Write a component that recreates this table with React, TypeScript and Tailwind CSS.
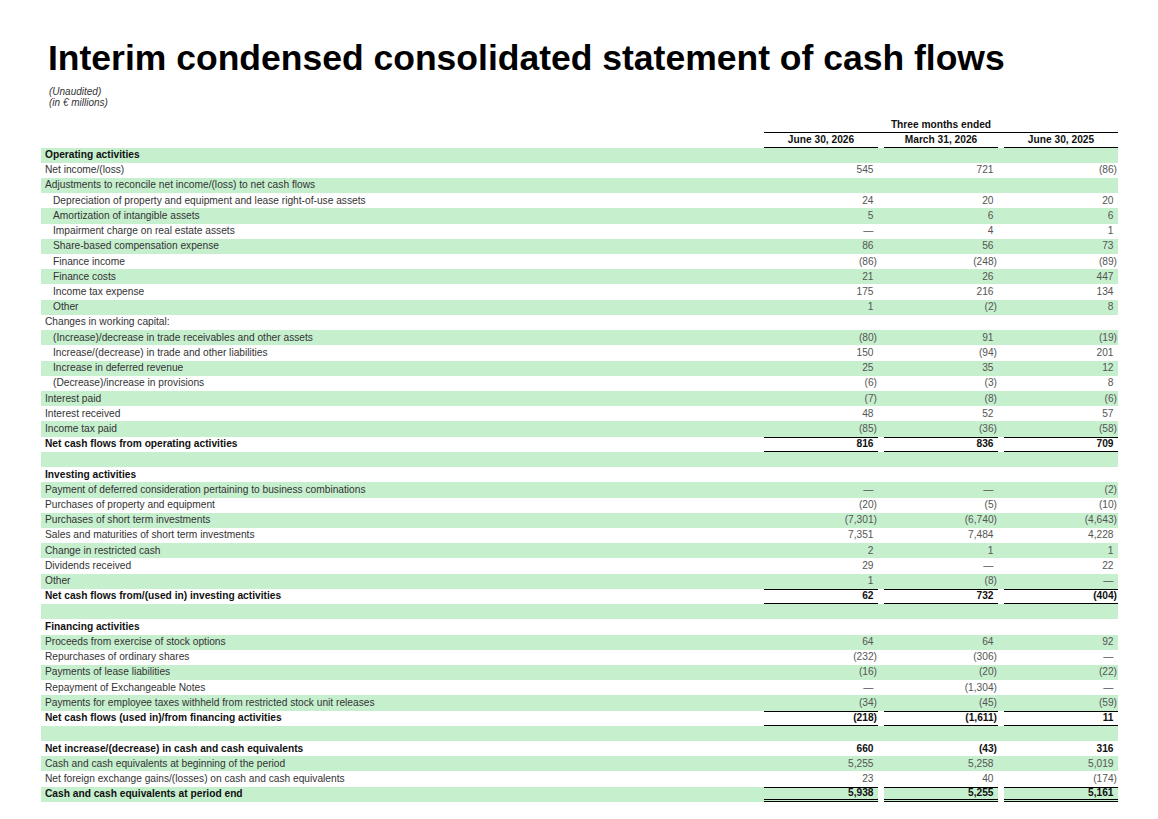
type Row = {
  label?: string
  v?: [string, string, string]
  bold?: boolean
  indent?: boolean
  total?: boolean
  grand?: boolean
}

const rows: Row[] = [
  { label: 'Operating activities', bold: true },
  { label: 'Net income/(loss)', v: ['545', '721', '(86)'] },
  { label: 'Adjustments to reconcile net income/(loss) to net cash flows' },
  { label: 'Depreciation of property and equipment and lease right-of-use assets', indent: true, v: ['24', '20', '20'] },
  { label: 'Amortization of intangible assets', indent: true, v: ['5', '6', '6'] },
  { label: 'Impairment charge on real estate assets', indent: true, v: ['—', '4', '1'] },
  { label: 'Share-based compensation expense', indent: true, v: ['86', '56', '73'] },
  { label: 'Finance income', indent: true, v: ['(86)', '(248)', '(89)'] },
  { label: 'Finance costs', indent: true, v: ['21', '26', '447'] },
  { label: 'Income tax expense', indent: true, v: ['175', '216', '134'] },
  { label: 'Other', indent: true, v: ['1', '(2)', '8'] },
  { label: 'Changes in working capital:' },
  { label: '(Increase)/decrease in trade receivables and other assets', indent: true, v: ['(80)', '91', '(19)'] },
  { label: 'Increase/(decrease) in trade and other liabilities', indent: true, v: ['150', '(94)', '201'] },
  { label: 'Increase in deferred revenue', indent: true, v: ['25', '35', '12'] },
  { label: '(Decrease)/increase in provisions', indent: true, v: ['(6)', '(3)', '8'] },
  { label: 'Interest paid', v: ['(7)', '(8)', '(6)'] },
  { label: 'Interest received', v: ['48', '52', '57'] },
  { label: 'Income tax paid', v: ['(85)', '(36)', '(58)'] },
  { label: 'Net cash flows from operating activities', bold: true, total: true, v: ['816', '836', '709'] },
  {},
  { label: 'Investing activities', bold: true },
  { label: 'Payment of deferred consideration pertaining to business combinations', v: ['—', '—', '(2)'] },
  { label: 'Purchases of property and equipment', v: ['(20)', '(5)', '(10)'] },
  { label: 'Purchases of short term investments', v: ['(7,301)', '(6,740)', '(4,643)'] },
  { label: 'Sales and maturities of short term investments', v: ['7,351', '7,484', '4,228'] },
  { label: 'Change in restricted cash', v: ['2', '1', '1'] },
  { label: 'Dividends received', v: ['29', '—', '22'] },
  { label: 'Other', v: ['1', '(8)', '—'] },
  { label: 'Net cash flows from/(used in) investing activities', bold: true, total: true, v: ['62', '732', '(404)'] },
  {},
  { label: 'Financing activities', bold: true },
  { label: 'Proceeds from exercise of stock options', v: ['64', '64', '92'] },
  { label: 'Repurchases of ordinary shares', v: ['(232)', '(306)', '—'] },
  { label: 'Payments of lease liabilities', v: ['(16)', '(20)', '(22)'] },
  { label: 'Repayment of Exchangeable Notes', v: ['—', '(1,304)', '—'] },
  { label: 'Payments for employee taxes withheld from restricted stock unit releases', v: ['(34)', '(45)', '(59)'] },
  { label: 'Net cash flows (used in)/from financing activities', bold: true, total: true, v: ['(218)', '(1,611)', '11'] },
  {},
  { label: 'Net increase/(decrease) in cash and cash equivalents', bold: true, v: ['660', '(43)', '316'] },
  { label: 'Cash and cash equivalents at beginning of the period', v: ['5,255', '5,258', '5,019'] },
  { label: 'Net foreign exchange gains/(losses) on cash and cash equivalents', v: ['23', '40', '(174)'] },
  { label: 'Cash and cash equivalents at period end', bold: true, grand: true, v: ['5,938', '5,255', '5,161'] },
]

function Cell({ value, row }: { value?: string; row: Row }) {
  const neg = value?.startsWith('(')
  const border = row.grand
    ? 'border-t border-b-[3px] border-double border-black'
    : row.total
      ? 'border-y border-black'
      : ''
  return (
    <div
      className={`flex h-full w-[114px] items-center justify-end ${border} ${neg ? 'pr-[1px]' : 'pr-[4.5px]'} ${
        row.bold ? 'font-bold text-[#111]' : 'text-[#555]'
      }`}
    >
      {value}
    </div>
  )
}

export default function App() {
  return (
    <div className="h-[819px] w-[1158px] overflow-hidden bg-white font-['Liberation_Sans',Arial,sans-serif] text-black">
      <h1 className="pl-[48px] pt-[40.5px] text-[35.5px] font-bold leading-[35.5px]">
        Interim condensed consolidated statement of cash flows
      </h1>
      <div className="mt-[9.5px] pl-[49px] text-[10px] italic leading-[11px] text-[#333]">
        <div>(Unaudited)</div>
        <div>(in € millions)</div>
      </div>

      <div className="ml-[41px] mt-[11px] w-[1077px]">
        {/* column headers */}
        <div className="flex text-[10.2px] font-bold text-[#111]">
          <div className="w-[723px]" />
          <div className="w-[354px]">
            <div className="border-b border-black pb-[2px] text-center leading-[11px]">Three months ended</div>
            <div className="flex h-[15px] justify-between">
              {['June 30, 2026', 'March 31, 2026', 'June 30, 2025'].map((h) => (
                <div key={h} className="flex w-[114px] items-center justify-center border-b border-black">
                  {h}
                </div>
              ))}
            </div>
          </div>
        </div>

        {rows.map((r, i) => {
          const green = i % 2 === 0
          const gap = `h-full w-[6px] ${green && !r.grand ? '' : 'bg-white'}`
          return (
            <div key={i} className={`flex h-[15.22px] text-[10.2px] leading-none ${green ? 'bg-[#c6efce]' : ''}`}>
              <div
                className={`flex w-[723px] items-center ${r.indent ? 'pl-[12px]' : 'pl-[4px]'} ${
                  r.bold ? 'font-bold text-[#111]' : 'text-[#333]'
                }`}
              >
                {r.label}
              </div>
              <Cell value={r.v?.[0]} row={r} />
              <div className={gap} />
              <Cell value={r.v?.[1]} row={r} />
              <div className={gap} />
              <Cell value={r.v?.[2]} row={r} />
            </div>
          )
        })}
      </div>
    </div>
  )
}
